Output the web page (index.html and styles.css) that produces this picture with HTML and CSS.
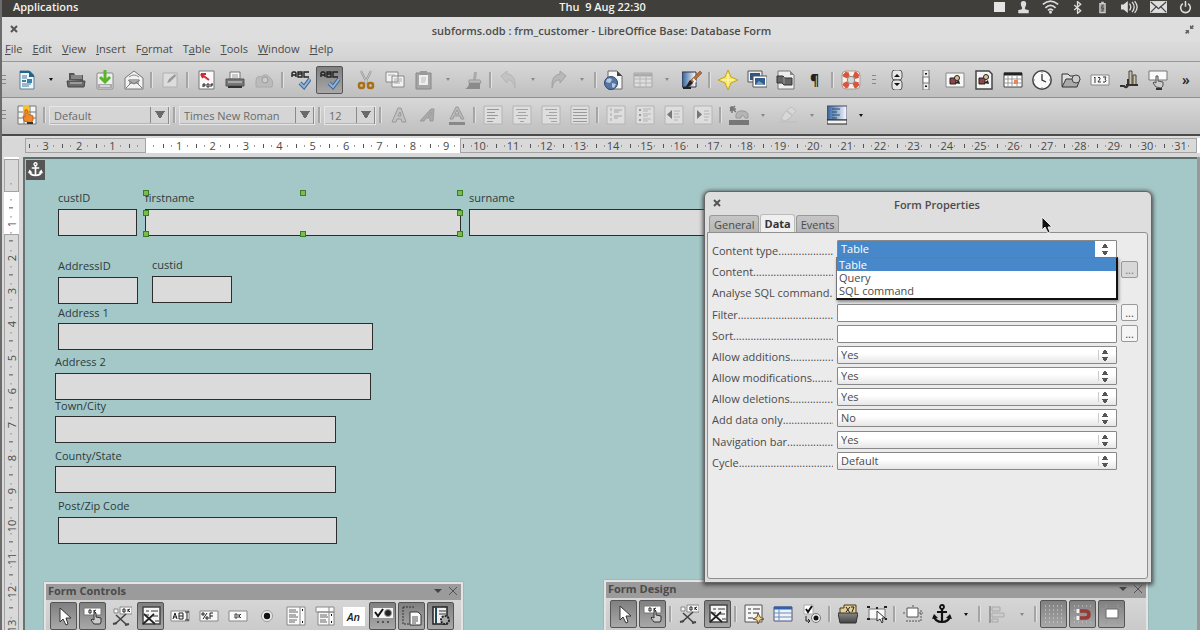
FILE: index.html
```html
<!DOCTYPE html>
<html lang="en">
<head>
<meta charset="utf-8">
<title>subforms.odb : frm_customer - LibreOffice Base: Database Form</title>
<link rel="stylesheet" href="styles.css">
</head>
<body>
<svg class="sprite" aria-hidden="true">
  <defs>
    <linearGradient id="steel" x1="0" y1="0" x2="0" y2="1"><stop offset="0" stop-color="#888"/><stop offset="1" stop-color="#444"/></linearGradient>
    <linearGradient id="sky" x1="0" y1="0" x2="1" y2="0"><stop offset="0" stop-color="#30609a"/><stop offset="1" stop-color="#fff"/></linearGradient>
  </defs>
  <symbol id="new" viewBox="0 0 20 20"><path d="M3 1h9l5 5v13H3z" fill="#eef6fb" stroke="#5f7f95"/><path d="M3 1h10l4 4v2h-5V3H3z" fill="#23658c"/><path d="M5 6h5M5 8h5M5 14h9M5 16h7" stroke="#44779a"/><path d="M5 10h4v2H5zM10 9h5v4h-5z" fill="#3b83aa"/></symbol>
  <symbol id="open" viewBox="0 0 20 20"><path d="M3 10V3h5l1 2h8v6z" fill="#555"/><path d="M5 6h11M5 8h11" stroke="#bbb"/><path d="M1 11h18l-1 6H2z" fill="#6b6b6b" stroke="#444"/><path d="M4 13h12" stroke="#ccc"/></symbol>
  <symbol id="save" viewBox="0 0 20 20"><rect x="2" y="3" width="16" height="16" rx="1" fill="#eee" stroke="#888"/><path d="M3 14h14v4H3z" fill="#aaa"/><path d="M5 16h10" stroke="#fff"/><path d="M10 0v11M5 7l5 5 5-5" fill="none" stroke="#58b52b" stroke-width="3"/></symbol>
  <symbol id="mail" viewBox="0 0 20 20"><path d="M1 8l9-7 9 7v11H1z" fill="#f2f2f2" stroke="#777"/><path d="M5 9h10v5H5z" fill="#aaa"/><path d="M4 10l6 4 6-4M2 18l6-6M18 18l-6-6" fill="none" stroke="#777"/><path d="M5 7q5-4 10 0" stroke="#888" fill="none"/></symbol>
  <symbol id="edit" viewBox="0 0 20 20"><path d="M3 3h14v14H3z" fill="#ddd" stroke="#b0b0b0"/><path d="M7 13l2-4 6-5 1 2-6 6z" fill="#999"/></symbol>
  <symbol id="pdf" viewBox="0 0 20 20"><path d="M3 1h15v18H3z" fill="#fafafa" stroke="#777"/><path d="M5 4l8 6M5 4l5 0M5 4l2 4" stroke="#d02a35" stroke-width="2"/><path d="M7 17v-3h2v2H7M11 14v3h2v-3zM17 14h-2v3M15 15h2" fill="none" stroke="#222"/></symbol>
  <symbol id="print" viewBox="0 0 20 20"><path d="M5 2h10v7H5z" fill="#f7f7f7" stroke="#777"/><path d="M7 5h6M7 7h6" stroke="#999"/><path d="M1 9h18v7H1z" fill="#777" stroke="#555"/><path d="M3 16h14v2H3z" fill="#333"/><path d="M3 12h14" stroke="#ddd"/></symbol>
  <symbol id="preview" viewBox="0 0 20 20"><path d="M2 10q1-5 5-3 5-5 9 1 4 2 2 9H2z" fill="#bbb" stroke="#aaa"/><circle cx="11" cy="10" r="3" fill="#ccc" stroke="#999"/></symbol>
  <symbol id="spell" viewBox="0 0 20 20"><path d="M1 7V3l1-1h2l1 1v4M1 5h4M7 2v5h4V2zM7 4h4M18 2h-5v5h5" fill="none" stroke="#222" stroke-width="1.4"/><path d="M9 13l4 4 6-8" fill="none" stroke="#46688e" stroke-width="4"/><path d="M9 13l4 4 6-8" fill="none" stroke="#8fb3dc" stroke-width="2"/></symbol>
  <symbol id="cut" viewBox="0 0 20 20"><path d="M5 1l6 12M15 1L9 13" stroke="#888" stroke-width="2"/><path d="M5 1l6 12M15 1L9 13" stroke="#eee" stroke-width=".7"/><g fill="none" stroke="#a87118" stroke-width="2.5"><rect x="3" y="13" width="5" height="5" rx="2"/><rect x="12" y="13" width="5" height="5" rx="2"/></g></symbol>
  <symbol id="copy" viewBox="0 0 20 20"><path d="M1 2h12v10H1zM7 6h12v11H7z" fill="#f2f2f2" stroke="#888"/><path d="M3 5h7M9 9h8M9 11h8M9 13h6" stroke="#aaa"/></symbol>
  <symbol id="paste" viewBox="0 0 20 20"><path d="M2 3h15v16H2z" fill="#a5a5a5" stroke="#888"/><path d="M5 5h9v10H5z" fill="#eee"/><path d="M6 1h7v4H6z" fill="#999"/><path d="M7 8h5M7 10h5M7 12h4" stroke="#bbb"/></symbol>
  <symbol id="brush" viewBox="0 0 20 20"><path d="M11 2h3l-1 8h-3z" fill="#aaa"/><path d="M6 10h11l1 3H6z" fill="#bbb" stroke="#999"/><path d="M6 13h11v6H2q4-2 4-6z" fill="#8b8b8b"/></symbol>
  <symbol id="undo" viewBox="0 0 20 20"><path d="M2 6l6-5v3q9 0 8 14-2-9-8-8v3z" fill="#c3c3c3" stroke="#b5b5b5"/></symbol>
  <symbol id="redo" viewBox="0 0 20 20"><path d="M18 6l-6-5v3Q3 5 4 18q2-9 8-8v3z" fill="#b8b8b8" stroke="#a2a2a2"/></symbol>
  <symbol id="globe" viewBox="0 0 20 20"><path d="M4 1h9l5 5v13H4z" fill="#f7f7f7" stroke="#666"/><path d="M13 1v5h5" fill="#444"/><circle cx="7" cy="13" r="6.500" fill="#5676a5" stroke="#2c466f"/><path d="M3 9q4-2 5 1l-2 3-4-1zM8 13l4 1-2 4-2-1z" fill="#b7cae0"/></symbol>
  <symbol id="grid" viewBox="0 0 20 20"><path d="M1 3h18v14H1z" fill="#ddd" stroke="#a6a6a6"/><path d="M1 5h18" stroke="#aaa" stroke-width="3"/><path d="M1 9h18M1 13h18M7 3v14M13 3v14" stroke="#b5b5b5"/></symbol>
  <symbol id="draw" viewBox="0 0 20 20"><path d="M0 2h14v15H0z" fill="url(#sky)" stroke="#334"/><path d="M6 13L18 1l2 2L9 14z" fill="#b96d35" stroke="#6d4124" stroke-width=".5"/><path d="M8 10l3 3-3 3-5 2z" fill="#222"/><path d="M11 9l3 3" stroke="#eee" stroke-width="2"/><path d="M1 18h8" stroke="#222" stroke-width="2"/></symbol>
  <symbol id="star" viewBox="0 0 20 20"><path d="M10 0l3 7 7 3-7 3-3 7-3-7-7-3 7-3z" fill="#f5e55c" stroke="#c2a528"/><path d="M10 4v12M4 10h12" stroke="#fffbd0"/></symbol>
  <symbol id="gallery" viewBox="0 0 20 20"><path d="M1 1h14v11H1z" fill="#eee" stroke="#555"/><path d="M3 3h10v7H3z" fill="#2d5684"/><path d="M6 6h14v11H6z" fill="#fff" stroke="#555"/><path d="M8 8h10v7H8z" fill="#2e5c8f"/><path d="M8 15l4-4 6 4z" fill="#7c9ebd"/></symbol>
  <symbol id="sources" viewBox="0 0 20 20"><path d="M2 1h12l4 4v14H2z" fill="#eee" stroke="#777"/><path d="M14 1v4h4" fill="#888"/><path d="M1 6h6l2 2h7v7H8l-2-2H1z" fill="#666" stroke="#333"/><path d="M8 7v7" stroke="#999" fill="none"/></symbol>
  <symbol id="help" viewBox="0 0 20 20"><rect x="1" y="1" width="18" height="18" rx="4" fill="#f4f0e8" stroke="#a99"/><circle cx="10" cy="10" r="6.2" fill="none" stroke="#d9543c" stroke-width="4.5" stroke-dasharray="5 4.74" stroke-dashoffset="-2"/><circle cx="10" cy="10" r="3.7" fill="#d6d6d6" stroke="#888"/><path d="M2 6l4-4M14 2l4 4M18 14l-4 4M6 18l-4-4" stroke="#d9543c" stroke-width="2"/></symbol>
  <symbol id="spin" viewBox="0 0 20 20"><rect x="5" y="0" width="10" height="10" rx="3" fill="#e8e8e8" stroke="#555"/><rect x="5" y="10" width="10" height="10" rx="3" fill="#e8e8e8" stroke="#555"/><path d="M7 7l3-3 3 3zM7 13l3 3 3-3z" fill="#111"/></symbol>
  <symbol id="scroll" viewBox="0 0 20 20"><path d="M7 0h6v20H7z" fill="#eee" stroke="#777"/><path d="M7 7h6v6H7z" fill="#fff" stroke="#777"/><path d="M9 4l1-1 1 1zM9 16l1 1 1-1z" fill="#111" stroke="#111"/></symbol>
  <symbol id="imgbtn" viewBox="0 0 20 20"><path d="M1 3h18v14H1z" fill="#f7f7f7" stroke="#888"/><path d="M5 8h6v6H5z" fill="#8d4640" stroke="#222"/><circle cx="12" cy="8" r="2.5" fill="#ddc09c" stroke="#222"/><path d="M10 13l4-3 1 4z" fill="#222"/></symbol>
  <symbol id="imgctl" viewBox="0 0 20 20"><path d="M2 1h13l3 3v15H2z" fill="#f4f4f4" stroke="#444" stroke-width="1.5"/><path d="M5 8h6v6H5z" fill="#8d4640" stroke="#222"/><circle cx="12" cy="7" r="2.5" fill="#ddc09c" stroke="#222"/><path d="M10 13l4-3 1 4z" fill="#222"/></symbol>
  <symbol id="date" viewBox="0 0 20 20"><path d="M1 3h18v14H1z" fill="#fff" stroke="#444"/><path d="M1 4h18" stroke="#222" stroke-width="3"/><path d="M1 9h18M1 13h18M5 5v12M9 5v12M14 5v12" stroke="#999"/><path d="M11 10h4v4h-4z" fill="#e8835f"/></symbol>
  <symbol id="clock" viewBox="0 0 20 20"><circle cx="10" cy="10" r="9.2" fill="#fafafa" stroke="#444" stroke-width="1.5"/><path d="M10 4v6l4 2" fill="none" stroke="#333" stroke-width="1.3"/><path d="M10 2v1M10 17v1M2 10h1M17 10h1" stroke="#888"/></symbol>
  <symbol id="file" viewBox="0 0 20 20"><path d="M1 16V4h6l2 2h7v10z" fill="#ddd" stroke="#333"/><path d="M1 17l4-8h14l-3 8z" fill="#aaa" stroke="#333"/><circle cx="15" cy="9" r="4" fill="#ccc" stroke="#444"/></symbol>
  <symbol id="num" viewBox="0 0 20 20"><path d="M1 5h18v10H1z" fill="#f8f8f8" stroke="#888"/><path d="M4 8l1-1v6M8 8l1-1 1 1v1l-2 3h3M13 7h3l-1 2q2 2 0 3h-2" fill="none" stroke="#333"/></symbol>
  <symbol id="nav" viewBox="0 0 20 20"><path d="M10 1h3v14h-3zM14 5h3v10h-3z" fill="#cdc5a5" stroke="#444"/><path d="M7 15h12M1 16h4q3 3 4-1V9" fill="none" stroke="#333" stroke-width="2"/></symbol>
  <symbol id="push" viewBox="0 0 20 20"><path d="M1 1h18v9H1z" fill="#fafafa" stroke="#777"/><path d="M8 17l-3-4 1-1 2 1V6h2v5l5 1v4l-2 2z" fill="#ccc" stroke="#555"/><path d="M8 19h6" stroke="#333" stroke-width="2"/></symbol>
  <symbol id="styles" viewBox="0 0 20 20"><path d="M1 1h18v18H1z" fill="#f5f5f5" stroke="#777"/><path d="M1 7h18M1 13h18M7 1v18M13 1v18" stroke="#777"/><path d="M6 0h6v8H6z" fill="#f6c12a"/><path d="M7 16l-1-5 2 1V5q2-1 3 1v3l5 2v4l-2 3z" fill="#ef8a2b" stroke="#c3621a"/><path d="M10 18h6" stroke="#333" stroke-width="2"/></symbol>
  <symbol id="bold" viewBox="0 0 20 20"><path d="M3 17L9 3h3l5 14h-4l-1-3H8l-1 3zM9 11h3l-1-4z" fill="#c2c2c2" stroke="#999"/></symbol>
  <symbol id="italic" viewBox="0 0 20 20"><path d="M2 16L13 4h3l-1 12h-3v-3H8l-2 3zM10 10h3V7z" fill="#aaa" stroke="#999"/></symbol>
  <symbol id="under" viewBox="0 0 20 20"><path d="M3 14L9 2h2l6 12h-3l-1-3H7l-1 3zM8 9h4l-2-4z" fill="#bbb" stroke="#999"/><path d="M2 17h16v3H2z" fill="#888"/></symbol>
  <symbol id="left" viewBox="0 0 20 20"><path d="M1 1h18v18H1z" fill="#dedede" stroke="#b4b4b4"/><path d="M4 4.500h12M4 7.500h8M4 10.500h11M4 13.500h8M4 16.500h6" stroke="#999"/></symbol>
  <symbol id="center" viewBox="0 0 20 20"><path d="M1 1h18v18H1z" fill="#dedede" stroke="#b4b4b4"/><path d="M4 4.500h12M6 7.500h8M4 10.500h12M6 13.500h8M8 16.500h4" stroke="#a5a5a5"/></symbol>
  <symbol id="right" viewBox="0 0 20 20"><path d="M1 1h18v18H1z" fill="#dedede" stroke="#b4b4b4"/><path d="M4 4.500h12M8 7.500h8M5 10.500h11M8 13.500h8M10 16.500h6" stroke="#a5a5a5"/></symbol>
  <symbol id="justify" viewBox="0 0 20 20"><path d="M1 1h18v18H1z" fill="#dedede" stroke="#b4b4b4"/><path d="M3 4.500h14M3 7.500h14M3 10.500h14M3 13.500h14M3 16.500h14" stroke="#999"/></symbol>
  <symbol id="numlist" viewBox="0 0 20 20"><path d="M1 1h18v18H1z" fill="#dedede" stroke="#b4b4b4"/><path d="M5 3v3M5 8v3M5 13v3M8 5h8M8 7h5M8 11h8M8 13h4" stroke="#a5a5a5"/></symbol>
  <symbol id="bullist" viewBox="0 0 20 20"><path d="M1 1h18v18H1z" fill="#dedede" stroke="#b4b4b4"/><path d="M4 5h2M4 10h2M4 15h2" stroke="#999" stroke-width="2"/><path d="M8 4h8M8 6h5M8 9h8M8 11h5M8 14h8M8 16h5" stroke="#b4b4b4"/></symbol>
  <symbol id="outdent" viewBox="0 0 20 20"><path d="M1 1h18v18H1z" fill="#dedede" stroke="#b4b4b4"/><path d="M8 5v9l-5-4.500z" fill="#777"/><path d="M10 6h6M10 9h5M10 12h6M10 15h4" stroke="#b4b4b4"/></symbol>
  <symbol id="indent" viewBox="0 0 20 20"><path d="M1 1h18v18H1z" fill="#dedede" stroke="#b4b4b4"/><path d="M4 5v9l5-4.500z" fill="#777"/><path d="M11 6h5M11 9h6M11 12h5M11 15h4" stroke="#b4b4b4"/></symbol>
  <symbol id="fontcol" viewBox="0 0 20 20"><path d="M0 15h20v5H0z" fill="#777"/><path d="M7 13q-1-6 4-7 6-1 8 3v4h-3q-1-4-4-2v2z" fill="#b5b5b5" stroke="#999"/><path d="M1 2l6 5M1 6l5-5M3 1v7M1 4h6" stroke="#777" stroke-width="1.500"/></symbol>
  <symbol id="marker" viewBox="0 0 20 20"><path d="M3 14l4-7 6-5 5 4-6 7-5 3z" fill="#d8d8d8" stroke="#bdbdbd"/><path d="M9 6l5 4M1 17h18" stroke="#c2c2c2" stroke-width="2"/></symbol>
  <symbol id="bgcol" viewBox="0 0 20 20"><path d="M0 1h20v14H0z" fill="url(#sky)" stroke="#446"/><path d="M5 4h8M5 7h5M5 10h8M5 13h5" stroke="#234a77"/><path d="M0 15h20v4H0z" fill="#f3f3f3" stroke="#222"/></symbol>
  <symbol id="arrow" viewBox="0 0 20 20"><path d="M6 2v14l3-3 3 6 2-1-2-6h5z" fill="#fff" stroke="#333"/></symbol>
  <symbol id="design" viewBox="0 0 20 20"><path d="M1 2h17v7H1z" fill="#fff" stroke="#777"/><path d="M6 4h2v3H6zM11 4v3M13 4l-2 1 2 2" fill="none" stroke="#222"/><path d="M11 18l-3-4 1-1 2 1V7h2v4l5 1v4l-1 2z" fill="#ccc" stroke="#333"/></symbol>
  <symbol id="control" viewBox="0 0 20 20"><path d="M8 1h12v7H8zM2 3h4v4H2z" fill="#f8f8f8" stroke="#888"/><path d="M11 3v3h2V3zM16 3v3M18 3l-2 1 2 2" stroke="#222" fill="none"/><path d="M3 18L14 8M4 9l11 10" stroke="#444" stroke-width="1.600"/><path d="M1 18l4-1M13 19l4-1" stroke="#444" stroke-width="2"/></symbol>
  <symbol id="form" viewBox="0 0 20 20"><path d="M2 1h17v17H2z" fill="#f6f6f6" stroke="#444" stroke-width="1.500"/><path d="M5 5h3M10 5h7M5 9h3M12 10h5M14 15h4" stroke="#777" stroke-width="1.500"/><path d="M2 18L13 8M3 8l11 10" stroke="#222" stroke-width="1.700"/></symbol>
  <symbol id="text" viewBox="0 0 20 20"><path d="M1 5h18v10H1z" fill="#f8f8f8" stroke="#888"/><path d="M3 13l2-6 2 6M3 11h4M9 7v6h4V7zM9 10h4M15 6h4M17 6v8M15 14h4" fill="none" stroke="#222"/></symbol>
  <symbol id="format" viewBox="0 0 20 20"><path d="M1 5h18v10H1z" fill="#f8f8f8" stroke="#888"/><path d="M3 7h2v2H3zM8 7l-4 6M7 11h2v2H7zM14 7h-3v6M11 10h3" fill="none" stroke="#222"/></symbol>
  <symbol id="button" viewBox="0 0 20 20"><path d="M1 5h18v10H1z" fill="#fafafa" stroke="#888"/><path d="M7 8v4h2V8zM11 8v4M13 8l-2 2 2 2" fill="none" stroke="#333"/></symbol>
  <symbol id="radio" viewBox="0 0 20 20"><circle cx="10" cy="10" r="5.500" fill="#eee" stroke="#999"/><circle cx="10" cy="10" r="3.200" fill="#111"/></symbol>
  <symbol id="list" viewBox="0 0 20 20"><path d="M1 1h18v18H1z" fill="#fafafa" stroke="#888"/><path d="M14 1v18" stroke="#888"/><path d="M3 4h7M3 6h9M3 9h7M3 11h9M3 14h8M3 16h6" stroke="#666"/><path d="M16 4h1M16 16h1" stroke="#111" stroke-width="2"/></symbol>
  <symbol id="combo" viewBox="0 0 20 20"><path d="M1 1h18v5H1zM3 6h16v13H3z" fill="#fafafa" stroke="#888"/><path d="M14 1v18" stroke="#888"/><path d="M5 9h7M5 11h8M5 14h6M5 16h7" stroke="#666"/><path d="M16 9h1M16 16h1" stroke="#111" stroke-width="2"/></symbol>
  <symbol id="more" viewBox="0 0 20 20"><path d="M0 2h20v10H0z" fill="#f5f5f5"/><path d="M2 6l3 4 5-7" fill="none" stroke="#111" stroke-width="2"/><circle cx="15" cy="7" r="3.500" fill="#222" stroke="#999"/><path d="M4 16h2M9 16h2M14 16h2" stroke="#555" stroke-width="2"/></symbol>
  <symbol id="designmore" viewBox="0 0 20 20"><path d="M1 1h12M1 1v17h6" fill="none" stroke="#333" stroke-dasharray="2 1"/><path d="M8 6h8l3 3v10H8z" fill="#fafafa" stroke="#333"/><path d="M10 11h6M10 13h6M10 15h6M10 17h4" stroke="#555"/></symbol>
  <symbol id="wizard" viewBox="0 0 20 20"><path d="M2 1h14v17H2z" fill="#eee" stroke="#222" stroke-width="1.500"/><path d="M5 1v17" stroke="#245" stroke-width="2"/><path d="M8 5h7M8 8h7" stroke="#333"/><circle cx="14" cy="14" r="4" fill="#aaa" stroke="#222" stroke-width="2" stroke-dasharray="2 1"/></symbol>
  <symbol id="formnav" viewBox="0 0 20 20"><path d="M1 1h17v17H1z" fill="#f6f6f6" stroke="#555"/><path d="M4 5h3M9 5h7M4 9h3M9 9h6M4 14h5" stroke="#777" stroke-width="1.500"/><path d="M14 9l2 4 4 2-4 1-2 4-1-4-4-1 4-2z" fill="#eed59a" stroke="#6e531f"/></symbol>
  <symbol id="fields" viewBox="0 0 20 20"><path d="M1 3h18v14H1z" fill="#eef3f9" stroke="#557"/><path d="M1 4h18" stroke="#2e62ad" stroke-width="3"/><path d="M1 9h18M1 13h18M6 5v12" stroke="#6c8cb5"/></symbol>
  <symbol id="convert" viewBox="0 0 20 20"><path d="M2 1h9v9H2z" fill="#fff" stroke="#aaa"/><path d="M4 5l2 3 4-6" fill="none" stroke="#111" stroke-width="2"/><circle cx="14" cy="14" r="4.500" fill="#eee" stroke="#777"/><circle cx="14" cy="14" r="2.500" fill="#111"/><path d="M4 12v5h4M6 15l2 2-2 2" fill="none" stroke="#222"/></symbol>
  <symbol id="tabs" viewBox="0 0 20 20"><path d="M2 10V4h4V1h12v9z" fill="#e8cf96" stroke="#44391f"/><path d="M8 3l4 6M12 3L8 8M13 3h3l-2 5" stroke="#222" fill="none"/><path d="M0 9h20l-2 10H2z" fill="url(#steel)" stroke="#333"/></symbol>
  <symbol id="autofocus" viewBox="0 0 20 20"><path d="M2 5h16v10H2z" fill="#fafafa" stroke="#777"/><path d="M0 3h3M17 3h3M0 15h3M9 4h2M18 15h2" stroke="#222" stroke-width="2"/><path d="M10 7v10l3-2 2 4 1-1-1-4h3z" fill="#fff" stroke="#333"/></symbol>
  <symbol id="possize" viewBox="0 0 20 20"><path d="M4 4h11v9H4z" fill="#fff" stroke="#555"/><path d="M3 17h15V6M10 1v2M0 9h3M16 9h4" fill="none" stroke="#555" stroke-dasharray="2 1"/></symbol>
  <symbol id="anchor" viewBox="0 0 20 20"><circle cx="10" cy="3" r="2" fill="none" stroke="currentColor" stroke-width="1.800"/><path d="M10 5v12M5 8h10M2 12q1 6 8 6 7 0 8-6" fill="none" stroke="currentColor" stroke-width="2.200"/><path d="M0 15l2-5 4 4zM20 15l-2-5-4 4z" fill="currentColor"/></symbol>
  <symbol id="align" viewBox="0 0 20 20"><path d="M2 2v17" stroke="#999" stroke-width="2"/><path d="M4 3h8v4H4zM4 9h12v4H4zM4 15h6v3H4z" fill="#ccc" stroke="#aaa"/></symbol>
  <symbol id="dots" viewBox="0 0 20 20"><path d="M1 2h19M1 6h19M1 10h19M1 14h19M1 18h19" stroke="#ddd" stroke-dasharray="1 3"/></symbol>
  <symbol id="magnet" viewBox="0 0 20 20"><path d="M1 2h19M1 18h19M1 6h4M1 14h4" stroke="#ccc" stroke-dasharray="1 3"/><path d="M5 7h7q4 0 4 3.500T12 14H5" fill="none" stroke="#973b38" stroke-width="3.500"/><path d="M5 5v4M5 12v4" stroke="#f3f3f3" stroke-width="3"/></symbol>
  <symbol id="helpline" viewBox="0 0 20 20"><path d="M0 5h20M4 0v20M16 0v20M0 14h20" stroke="#999" stroke-dasharray="2 1"/><path d="M4 5h12v9H4z" fill="#fff" stroke="#666"/></symbol>
  <symbol id="person" viewBox="0 0 20 20"><path d="M10 0q5 0 4 6l-2 5q0 2 6 3v5H2v-5q6-1 6-3L6 6q-1-6 4-6z" fill="#ddd"/></symbol>
  <symbol id="wifi" viewBox="0 0 20 16"><path d="M1 5q9-8 18 0M4 9q6-6 12 0M7 12q3-3 6 0" fill="none" stroke="#ddd" stroke-width="2"/><circle cx="10" cy="14" r="1.800" fill="#ddd"/></symbol>
  <symbol id="bt" viewBox="0 0 20 20"><path d="M5 6l10 9-5 4V1l5 4-10 9" fill="none" stroke="#ddd" stroke-width="2"/></symbol>
  <symbol id="battery" viewBox="0 0 20 20"><path d="M6 4h8v14H6zM8 2h4" fill="#888" stroke="#ccc" stroke-width="2"/><path d="M11 6l-3 5h4l-3 5" fill="none" stroke="#333"/></symbol>
  <symbol id="sound" viewBox="0 0 20 16"><path d="M0 5h3l5-4v14l-5-4H0z" fill="#ddd"/><path d="M10 4q3 4 0 8M13 2q5 6 0 12M16 1q6 7 0 14" fill="none" stroke="#ddd" stroke-width="1.500"/></symbol>
  <symbol id="env" viewBox="0 0 20 16"><path d="M0 1h20v14H0z" fill="#ddd"/><path d="M1 2l9 8 9-8M1 14l7-7M19 14l-7-7" fill="none" stroke="#444" stroke-width="1.500"/></symbol>
  <symbol id="power" viewBox="0 0 20 20"><path d="M6 4a7.500 7.500 0 1 0 8 0M10 0v9" fill="none" stroke="#ddd" stroke-width="2.400"/></symbol>
  <symbol id="restore" viewBox="0 0 20 20"><path d="M11 0v9h9l-3-3 3-3-3-3-3 3zM9 20v-9H0l3 3-3 3 3 3 3-3z" fill="#666"/></symbol>
</svg>

<div class="app">
  <header class="panel">
    <span class="panel-menu">Applications</span>
    <span class="panel-clock">Thu&nbsp; 9 Aug 22:30</span>
    <div class="tray">
      <span class="stop"></span>
      <svg><use href="#person"/></svg>
      <svg class="wide"><use href="#wifi"/></svg>
      <svg><use href="#bt"/></svg>
      <svg><use href="#battery"/></svg>
      <svg class="wide"><use href="#sound"/></svg>
      <svg class="wide"><use href="#env"/></svg>
      <svg><use href="#power"/></svg>
    </div>
  </header>

  <div class="titlebar">
    <button class="close" aria-label="Close"><svg viewBox="0 0 8 8"><path d="M1 1l6 6M7 1L1 7"/></svg></button>
    <h1>subforms.odb : frm_customer - LibreOffice Base: Database Form</h1>
    <button class="restore" aria-label="Restore"><svg><use href="#restore"/></svg></button>
  </div>

  <nav class="menubar">
    <a href="#"><u>F</u>ile</a><a href="#"><u>E</u>dit</a><a href="#"><u>V</u>iew</a><a href="#"><u>I</u>nsert</a><a href="#">F<u>o</u>rmat</a><a href="#">T<u>a</u>ble</a><a href="#"><u>T</u>ools</a><a href="#"><u>W</u>indow</a><a href="#"><u>H</u>elp</a>
  </nav>

  <div class="toolbar">
    <i class="grip"></i>
    <button class="tool" aria-label="New"><svg><use href="#new"/></svg></button>
    <button class="drop" aria-label="New options"></button>
    <button class="tool" aria-label="Open"><svg><use href="#open"/></svg></button>
    <button class="tool" aria-label="Save"><svg><use href="#save"/></svg></button>
    <button class="tool" aria-label="E-mail"><svg><use href="#mail"/></svg></button>
    <i class="sep"></i>
    <button class="tool" aria-label="Edit file"><svg><use href="#edit"/></svg></button>
    <i class="sep"></i>
    <button class="tool" aria-label="Export PDF"><svg><use href="#pdf"/></svg></button>
    <button class="tool" aria-label="Print"><svg><use href="#print"/></svg></button>
    <button class="tool" aria-label="Preview"><svg><use href="#preview"/></svg></button>
    <i class="sep wide"></i>
    <button class="tool" aria-label="Spelling"><svg><use href="#spell"/></svg></button>
    <button class="tool on" aria-label="AutoSpellcheck"><svg><use href="#spell"/></svg></button>
    <i class="sep blank"></i>
    <button class="tool" aria-label="Cut"><svg><use href="#cut"/></svg></button>
    <button class="tool" aria-label="Copy"><svg><use href="#copy"/></svg></button>
    <button class="tool" aria-label="Paste"><svg><use href="#paste"/></svg></button>
    <button class="drop dim" aria-label="Paste options"></button>
    <button class="tool" aria-label="Format paintbrush"><svg><use href="#brush"/></svg></button>
    <i class="sep"></i>
    <button class="tool" aria-label="Undo"><svg><use href="#undo"/></svg></button>
    <button class="drop dim" aria-label="Undo options"></button>
    <button class="tool" aria-label="Redo"><svg><use href="#redo"/></svg></button>
    <button class="drop dim" aria-label="Redo options"></button>
    <i class="sep"></i>
    <button class="tool" aria-label="Hyperlink"><svg><use href="#globe"/></svg></button>
    <button class="tool" aria-label="Table"><svg><use href="#grid"/></svg></button>
    <button class="drop dim" aria-label="Table options"></button>
    <button class="tool" aria-label="Draw functions"><svg><use href="#draw"/></svg></button>
    <i class="sep"></i>
    <button class="tool" aria-label="Navigator"><svg><use href="#star"/></svg></button>
    <button class="tool" aria-label="Gallery"><svg><use href="#gallery"/></svg></button>
    <button class="tool" aria-label="Data sources"><svg><use href="#sources"/></svg></button>
    <button class="tool pilcrow" aria-label="Nonprinting characters">¶</button>
    <i class="sep"></i>
    <button class="tool" aria-label="Help"><svg><use href="#help"/></svg></button>
    <i class="grip mid"></i>
    <button class="tool" aria-label="Spin button"><svg><use href="#spin"/></svg></button>
    <button class="tool" aria-label="Scrollbar"><svg><use href="#scroll"/></svg></button>
    <button class="tool" aria-label="Image button"><svg><use href="#imgbtn"/></svg></button>
    <button class="tool" aria-label="Image control"><svg><use href="#imgctl"/></svg></button>
    <button class="tool" aria-label="Date field"><svg><use href="#date"/></svg></button>
    <button class="tool" aria-label="Time field"><svg><use href="#clock"/></svg></button>
    <button class="tool" aria-label="File selection"><svg><use href="#file"/></svg></button>
    <button class="tool" aria-label="Numeric field"><svg><use href="#num"/></svg></button>
    <button class="tool" aria-label="Navigation bar"><svg><use href="#nav"/></svg></button>
    <button class="tool" aria-label="Push button"><svg><use href="#push"/></svg></button>
    <button class="overflow" aria-label="More tools">»</button>
  </div>

  <div class="toolbar second">
    <i class="grip"></i>
    <button class="tool" aria-label="Styles"><svg><use href="#styles"/></svg></button>
    <i class="sep"></i>
    <select class="combo c-style" aria-label="Style" disabled><option>Default</option></select>
    <i class="sep"></i>
    <select class="combo c-font" aria-label="Font name" disabled><option>Times New Roman</option></select>
    <i class="sep"></i>
    <select class="combo c-size" aria-label="Font size" disabled><option>12</option></select>
    <i class="sep"></i>
    <button class="tool" aria-label="Bold"><svg><use href="#bold"/></svg></button>
    <button class="tool" aria-label="Italic"><svg><use href="#italic"/></svg></button>
    <button class="tool" aria-label="Underline"><svg><use href="#under"/></svg></button>
    <i class="sep"></i>
    <button class="tool" aria-label="Align left"><svg><use href="#left"/></svg></button>
    <button class="tool" aria-label="Centre"><svg><use href="#center"/></svg></button>
    <button class="tool" aria-label="Align right"><svg><use href="#right"/></svg></button>
    <button class="tool" aria-label="Justify"><svg><use href="#justify"/></svg></button>
    <i class="sep"></i>
    <button class="tool" aria-label="Numbering"><svg><use href="#numlist"/></svg></button>
    <button class="tool" aria-label="Bullets"><svg><use href="#bullist"/></svg></button>
    <button class="tool" aria-label="Decrease indent"><svg><use href="#outdent"/></svg></button>
    <button class="tool" aria-label="Increase indent"><svg><use href="#indent"/></svg></button>
    <i class="sep"></i>
    <button class="tool" aria-label="Font colour"><svg><use href="#fontcol"/></svg></button>
    <button class="drop dim" aria-label="Font colour options"></button>
    <button class="tool" aria-label="Highlighting"><svg><use href="#marker"/></svg></button>
    <button class="drop dim" aria-label="Highlighting options"></button>
    <button class="tool" aria-label="Background colour"><svg><use href="#bgcol"/></svg></button>
    <button class="drop" aria-label="Background options"></button>
  </div>

  <div class="hruler">
    <div class="hmargin before"></div><div class="hmargin after"></div>
    <div class="hscale"><span>3</span><span>2</span><span>1</span><span></span><span>1</span><span>2</span><span>3</span><span>4</span><span>5</span><span>6</span><span>7</span><span>8</span><span>9</span><span>10</span><span>11</span><span>12</span><span>13</span><span>14</span><span>15</span><span>16</span><span>17</span><span>18</span><span>19</span><span>20</span><span>21</span><span>22</span><span>23</span><span>24</span><span>25</span><span>26</span><span>27</span><span>28</span><span>29</span><span>30</span><span>31</span></div>
  </div>

  <main class="workspace">
    <div class="vruler">
      <div class="vmargin before"></div><div class="vmargin after"></div>
      <div class="vscale"><span></span><span>1</span><span>2</span><span>3</span><span>4</span><span>5</span><span>6</span><span>7</span><span>8</span><span>9</span><span>10</span><span>11</span><span>12</span><span>13</span></div>
    </div>
    <div class="canvas">
      <span class="anchor-mark"><svg><use href="#anchor"/></svg></span>
      <div class="field f-cust"><label for="cust">custID</label><input id="cust"></div>
      <div class="field f-first"><label for="first">firstname</label><input id="first"></div>
      <div class="field f-sur"><label for="sur">surname</label><input id="sur"></div>
      <div class="field f-addr"><label for="addr">AddressID</label><input id="addr"></div>
      <div class="field f-cid"><label for="cid">custid</label><input id="cid"></div>
      <div class="field f-a1"><label for="a1">Address 1</label><input id="a1"></div>
      <div class="field f-a2"><label for="a2">Address 2</label><input id="a2"></div>
      <div class="field f-town"><label for="town">Town/City</label><input id="town"></div>
      <div class="field f-county"><label for="county">County/State</label><input id="county"></div>
      <div class="field f-post"><label for="post">Post/Zip Code</label><input id="post"></div>
      <div class="selection"><i class="h l t"></i><i class="h c t"></i><i class="h r t"></i><i class="h l m"></i><i class="h r m"></i><i class="h l b"></i><i class="h c b"></i><i class="h r b"></i></div>
    </div>
  </main>

  <section class="float controls">
    <h2>Form Controls<span class="wbtns"><i class="tri"></i><svg viewBox="0 0 8 8"><path d="M0 0l8 8M8 0L0 8"/></svg></span></h2>
    <div class="tools">
      <button class="tool on" aria-label="Select"><svg><use href="#arrow"/></svg></button>
      <button class="tool on" aria-label="Design mode"><svg><use href="#design"/></svg></button>
      <button class="tool" aria-label="Control"><svg><use href="#control"/></svg></button>
      <button class="tool on" aria-label="Form"><svg><use href="#form"/></svg></button>
      <button class="tool" aria-label="Text box"><svg><use href="#text"/></svg></button>
      <button class="tool" aria-label="Formatted field"><svg><use href="#format"/></svg></button>
      <button class="tool" aria-label="Push button"><svg><use href="#button"/></svg></button>
      <button class="tool" aria-label="Option button"><svg><use href="#radio"/></svg></button>
      <button class="tool" aria-label="List box"><svg><use href="#list"/></svg></button>
      <button class="tool" aria-label="Combo box"><svg><use href="#combo"/></svg></button>
      <button class="tool" aria-label="Label field"><span class="an">An</span></button>
      <button class="tool on" aria-label="More controls"><svg><use href="#more"/></svg></button>
      <button class="tool on" aria-label="Form design"><svg><use href="#designmore"/></svg></button>
      <button class="tool on" aria-label="Wizards"><svg><use href="#wizard"/></svg></button>
    </div>
  </section>

  <section class="float design">
    <h2>Form Design<span class="wbtns"><i class="tri"></i><svg viewBox="0 0 8 8"><path d="M0 0l8 8M8 0L0 8"/></svg></span></h2>
    <div class="tools">
      <button class="tool on" aria-label="Select"><svg><use href="#arrow"/></svg></button>
      <button class="tool on" aria-label="Design mode"><svg><use href="#design"/></svg></button>
      <i class="sep"></i>
      <button class="tool" aria-label="Control"><svg><use href="#control"/></svg></button>
      <button class="tool on" aria-label="Form"><svg><use href="#form"/></svg></button>
      <i class="sep"></i>
      <button class="tool" aria-label="Form navigator"><svg><use href="#formnav"/></svg></button>
      <button class="tool" aria-label="Add field"><svg><use href="#fields"/></svg></button>
      <button class="tool" aria-label="Replace with"><svg><use href="#convert"/></svg></button>
      <i class="sep"></i>
      <button class="tool" aria-label="Activation order"><svg><use href="#tabs"/></svg></button>
      <button class="tool" aria-label="Automatic control focus"><svg><use href="#autofocus"/></svg></button>
      <i class="sep"></i>
      <button class="tool" aria-label="Position and size"><svg><use href="#possize"/></svg></button>
      <button class="tool" aria-label="Change anchor"><svg><use href="#anchor"/></svg></button>
      <button class="drop" aria-label="Anchor options"></button>
      <i class="sep"></i>
      <button class="tool" aria-label="Align"><svg><use href="#align"/></svg></button>
      <button class="drop dim" aria-label="Align options"></button>
      <i class="sep"></i>
      <button class="tool on" aria-label="Display grid"><svg><use href="#dots"/></svg></button>
      <button class="tool on" aria-label="Snap to grid"><svg><use href="#magnet"/></svg></button>
      <button class="tool on" aria-label="Helplines"><svg><use href="#helpline"/></svg></button>
    </div>
  </section>

  <section class="dialog" role="dialog" aria-labelledby="dlg">
    <div class="dlg-title">
      <button class="close" aria-label="Close"><svg viewBox="0 0 8 8"><path d="M1 1l6 6M7 1L1 7"/></svg></button>
      <h2 id="dlg">Form Properties</h2>
    </div>
    <div class="tablist" role="tablist">
      <button role="tab">General</button><button role="tab" class="active" aria-selected="true">Data</button><button role="tab">Events</button>
    </div>
    <div class="sheet">
      <div class="rows">
        <div class="row"><label for="p1">Content type</label><div class="cell"><select id="p1" class="focus"><option>Table</option></select>
          <ul class="popup" role="listbox" aria-label="Content type"><li role="option" aria-selected="true" class="sel">Table</li><li role="option">Query</li><li role="option">SQL command</li></ul></div></div>
        <div class="row"><label for="p2">Content</label><div class="cell"><select id="p2"></select></div><button class="dots" aria-label="Content" disabled>...</button></div>
        <div class="row"><label for="p3">Analyse SQL command</label><div class="cell"><select id="p3"></select></div></div>
        <div class="row"><label for="p4">Filter</label><div class="cell"><input id="p4"></div><button class="dots" aria-label="Filter">...</button></div>
        <div class="row"><label for="p5">Sort</label><div class="cell"><input id="p5"></div><button class="dots" aria-label="Sort">...</button></div>
        <div class="row"><label for="p6">Allow additions</label><div class="cell"><select id="p6"><option>Yes</option></select></div></div>
        <div class="row"><label for="p7">Allow modifications</label><div class="cell"><select id="p7"><option>Yes</option></select></div></div>
        <div class="row"><label for="p8">Allow deletions</label><div class="cell"><select id="p8"><option>Yes</option></select></div></div>
        <div class="row"><label for="p9">Add data only</label><div class="cell"><select id="p9"><option>No</option></select></div></div>
        <div class="row"><label for="p10">Navigation bar</label><div class="cell"><select id="p10"><option>Yes</option></select></div></div>
        <div class="row"><label for="p11">Cycle</label><div class="cell"><select id="p11"><option>Default</option></select></div></div>
      </div>
    </div>
  </section>

  <svg class="pointer" viewBox="0 0 12 18"><path d="M1 1v13l3-3 3 6 2-1-2-5h4z"/></svg>
</div>
</body>
</html>
```
FILE: styles.css
```css
* { box-sizing: border-box; }
body {
  margin: 0;
  font: 11px/15px "Open Sans", "Noto Sans", sans-serif;
  color: #4a4a4a;
}
button, select, input { font: inherit; color: inherit; margin: 0; }
button { padding: 0; border: 0; background: none; }
h1, h2, ul { margin: 0; padding: 0; font-size: 11px; line-height: 15px; }
h1, h2, .panel, .tablist .active { font-weight: 600; }
.sprite { position: absolute; width: 0; height: 0; }

.app {
  position: relative;
  display: flex;
  flex-direction: column;
  height: 100vh;
  overflow: hidden;
  background: #d8d8d8;
  border-left: 2px solid #6c6c6c;
}

/* desktop panel */
.panel {
  display: grid;
  grid-template-columns: 1fr auto 1fr;
  align-items: center;
  height: 17px;
  margin-left: -2px;
  padding: 0 8px 5px 13px;
  background: #403f3c;
  color: #f4f3ee;
  line-height: 12px;
}
.tray { display: flex; justify-content: flex-end; align-items: center; gap: 12px; }
.tray svg { width: 13px; height: 13px; }
.tray .wide { width: 17px; height: 14px; }
.stop { width: 11px; height: 10px; background: #e4e4e4; }

/* window title */
.titlebar {
  display: grid;
  grid-template-columns: 20px 1fr 20px;
  align-items: center;
  height: 24px;
  padding: 0 1px 0 2px;
  background: #dedede;
}
.titlebar h1 { text-align: center; color: #4c4c4c; padding-top: 2px; }
.close { display: flex; justify-content: center; }
.close svg { width: 8px; height: 8px; fill: none; stroke: #555; stroke-width: 2; }
.restore svg { width: 9px; height: 9px; display: block; margin: auto; }

.menubar {
  display: flex;
  gap: 10px;
  height: 21px;
  padding: 0 3px;
  background: linear-gradient(#dcdcdc, #d2d2d2);
  border-bottom: 1px solid #999;
}
.menubar a { color: inherit; text-decoration: none; }

/* toolbars */
.toolbar {
  display: flex;
  align-items: center;
  height: 36px;
  background: linear-gradient(#d8d8d8, #bfbfbf);
  border-bottom: 1px solid #8f8f8f;
}
.toolbar.second { height: 38px; padding-bottom: 2px; border-bottom: 2px solid #4a4a4a; }
.tool {
  flex: none;
  display: flex;
  align-items: center;
  justify-content: center;
  width: 27px;
  height: 28px;
  margin: 0 1px;
  color: #111;
}
.tool svg { width: 20px; height: 20px; }
.tool.on {
  border: 1px solid #555;
  border-radius: 2px;
  background: linear-gradient(#808080, #a8a8a8);
}
.pilcrow { font-size: 14px; font-weight: bold; color: #222; }
.drop { flex: none; width: 20px; height: 28px; display: flex; align-items: center; justify-content: center; }
.drop::after { content: ""; border: 2px solid transparent; border-top: 3px solid #111; border-bottom: 0; }
.drop.dim::after { border-top-color: #888; }
.sep { flex: none; display: flex; justify-content: center; width: 7px; height: 16px; }
.sep.wide { width: 8px; }
.sep::after { content: ""; width: 2px; background: #a5a5a5; border-right: 1px solid #e2e2e2; }
.sep.blank::after { display: none; }
.grip { flex: none; width: 10px; height: 10px; background: repeating-linear-gradient(#888 0 1px, transparent 1px 4px) 0 0 / 4px 10px no-repeat; }
.grip.mid { width: 17px; background-position-x: 7px; }
.overflow { flex: 1; font-size: 14px; font-weight: 600; color: #222; }

.combo {
  appearance: none;
  height: 19px;
  margin: 0 1px;
  padding: 0 0 0 4px;
  border: 1px solid #e6e6e6;
  border-radius: 0;
  color: #6a6a6a;
  opacity: 1;
  background:
    linear-gradient(to bottom right, #6a6a6a 50%, transparent 51%) right 4px center / 5px 8px no-repeat,
    linear-gradient(to bottom left, #6a6a6a 50%, transparent 51%) right 9px center / 5px 8px no-repeat,
    linear-gradient(#8a8a8a, #8a8a8a) right 18px top 0 / 1px 100% no-repeat,
    #d5d5d5;
  box-shadow: inset -1px 0 #8a8a8a, inset 0 -1px #b5b5b5;
}
.c-style { width: 121px; }
.c-font { width: 136px; }
.c-size { width: 52px; }

/* rulers */
.hruler { position: relative; flex: none; height: 21px; background: #fff; border-top: 2px solid #ddd; border-bottom: 4px solid #d8d8d8; }
.hmargin { position: absolute; top: 0; bottom: 0; background: #d9d9d9; border: 1px solid #a3a3a3; }
.hmargin.before { left: 23px; width: 121px; }
.hmargin.after { left: 458px; right: 3px; }
.hruler::before { content: ""; position: absolute; left: 0; top: 0; bottom: 0; width: 23px; background: #d8d8d8; }
.hscale { position: relative; display: flex; height: 15px; margin: 0 3px 0 27px; overflow: hidden; }
.hscale span {
  flex: 1;
  text-align: center;
  background:
    linear-gradient(#555, #555) 0 6px / 1px 4px no-repeat,
    linear-gradient(#999, #999) 25% 7px / 1px 2px no-repeat,
    linear-gradient(#999, #999) 75% 7px / 1px 2px no-repeat;
}
.workspace { flex: 1; display: flex; min-height: 0; border-right: 3px solid #999; }
.vruler { position: relative; flex: none; width: 21px; background: linear-gradient(to right, #d8d8d8 2px, #fff 2px 17px, #d8d8d8 17px); overflow: hidden; }
.vmargin { position: absolute; left: 2px; width: 15px; background: #d9d9d9; border: 1px solid #a3a3a3; }
.vmargin.before { top: 2px; height: 33px; }
.vmargin.after { top: 77px; bottom: -1px; }
.vscale { position: relative; display: flex; flex-direction: column; width: 15px; height: 467px; margin: 18px 0 0 2px; }
.vscale span {
  flex: 1;
  display: flex;
  align-items: center;
  justify-content: center;
  writing-mode: vertical-rl;
  transform: rotate(180deg);
  background:
    linear-gradient(#555, #555) 6px 0 / 4px 1px no-repeat,
    linear-gradient(#999, #999) 7px 25% / 2px 1px no-repeat,
    linear-gradient(#999, #999) 7px 75% / 2px 1px no-repeat;
}

/* form canvas */
.canvas { position: relative; flex: 1; background: #a4c8c8; border-top: 2px solid #5d6d6d; border-left: 2px solid #687272; overflow: hidden; }
.anchor-mark { position: absolute; left: 1px; top: 1px; width: 19px; height: 20px; padding: 2px; background: #555; color: #fff; }
.anchor-mark svg { display: block; width: 15px; height: 15px; }
.field { position: absolute; display: flex; flex-direction: column; gap: 4px; color: #2e3a3a; }
.field input { width: 100%; height: 27px; padding: 0 4px; border: 1px solid #2c2c2c; background: #dbdbdb; border-radius: 0; }
.f-cust { left: 33px; top: 31px; width: 79px; }
.f-first { left: 120px; top: 31px; width: 316px; }
.f-sur { left: 444px; top: 31px; width: 316px; }
.f-addr { left: 33px; top: 99px; width: 80px; }
.f-cid { left: 127px; top: 98px; width: 80px; }
.f-a1 { left: 33px; top: 146px; width: 315px; }
.f-a2 { left: 30px; top: 195px; width: 316px; }
.f-town { left: 30px; top: 239px; width: 281px; }
.f-county { left: 30px; top: 289px; width: 281px; }
.f-post { left: 33px; top: 339px; width: 279px; }
.f-a1, .f-town, .f-county { gap: 3px; }
.selection { position: absolute; left: 118px; top: 31px; width: 320px; height: 47px; pointer-events: none; }
.h { position: absolute; width: 6px; height: 6px; background: #7cba52; border: 1px solid #3c7d22; }
.l { left: 0; } .c { left: 157px; } .r { right: 0; }
.t { top: 0; } .m { top: 20px; } .b { bottom: 0; }

/* floating toolbars */
.float { position: absolute; height: 60px; border: 2px solid #e4e4e4; border-bottom: 0; box-shadow: 0 0 1px #777; background: linear-gradient(#dcdcdc, #c6c6c6); }
.float h2 { display: flex; justify-content: space-between; align-items: flex-start; height: 16px; padding: 0 4px 0 2px; line-height: 13px; background: #9b9b9b; color: #4a4a4a; font-weight: bold; }
.wbtns { display: flex; align-items: center; gap: 7px; height: 14px; }
.wbtns svg { width: 8px; height: 8px; stroke: #555; fill: none; }
.tri { border: 4px solid transparent; border-top: 4px solid #444; border-bottom: 0; }
.tools { display: flex; align-items: center; padding: 2px 3px 0; }
.controls { left: 42px; top: 582px; width: 419px; }
.design { left: 602px; top: 580px; width: 544px; }
.an { width: 22px; height: 19px; line-height: 19px; background: #fff; color: #222; font-style: italic; font-weight: 600; }

/* properties dialog */
.dialog {
  position: absolute;
  left: 702px;
  top: 191px;
  width: 448px;
  height: 392px;
  display: flex;
  flex-direction: column;
  padding: 0 3px 3px 2px;
  border: 1px solid #666;
  border-radius: 6px 6px 0 0;
  background: #dedede;
  box-shadow: 0 1px 4px 1px #444;
}
.dlg-title { display: grid; grid-template-columns: 19px 1fr; align-items: center; height: 22px; }
.dlg-title h2 { text-align: center; color: #4c4c4c; padding-top: 2px; }
.tablist { display: flex; align-items: flex-end; gap: 1px; height: 18px; padding-left: 2px; }
.tablist button { height: 17px; line-height: 15px; padding: 0 4px; border: 1px solid #999; border-bottom: 0; border-radius: 3px 3px 0 0; background: linear-gradient(#c6c6c6, #b6b6b6); }
.tablist .active { height: 18px; padding: 0 3px; font-weight: bold; background: #efefef; color: #333; border-color: #bbb; }
.sheet { flex: 1; padding: 7px 8px 0 4px; border: 1px solid #8f8f8f; border-radius: 0 3px 3px 3px; background: #ebebeb; }
.rows { display: grid; grid-auto-rows: 1fr; height: 233px; }
.row { display: grid; grid-template-columns: 121px 280px 17px; gap: 4px; align-items: start; }
.row label { overflow: hidden; white-space: nowrap; padding-top: 3px; }
.row label::after { content: ".............................................................."; }
.cell { position: relative; height: 18px; }
.cell select, .cell input { display: block; width: 100%; height: 18px; padding: 0 0 1px 3px; border: 1px solid #888; border-radius: 1px; background: #fff; line-height: 15px; }
.cell select {
  appearance: none;
  background:
    linear-gradient(to top right, #555 50%, transparent 51%) right 8px top 2px / 3px 5px no-repeat,
    linear-gradient(to top left, #555 50%, transparent 51%) right 11px top 2px / 3px 5px no-repeat,
    linear-gradient(to bottom right, #555 50%, transparent 51%) right 8px bottom 1px / 3px 5px no-repeat,
    linear-gradient(to bottom left, #555 50%, transparent 51%) right 11px bottom 1px / 3px 5px no-repeat,
    linear-gradient(#ccc, #ccc) right 17px top 3px / 1px 10px no-repeat,
    linear-gradient(#fff 40%, #e6e6e6);
}
.cell select.focus {
  color: #fff;
  background:
    linear-gradient(to top right, #555 50%, transparent 51%) right 8px top 2px / 3px 5px no-repeat,
    linear-gradient(to top left, #555 50%, transparent 51%) right 11px top 2px / 3px 5px no-repeat,
    linear-gradient(to bottom right, #555 50%, transparent 51%) right 8px bottom 1px / 3px 5px no-repeat,
    linear-gradient(to bottom left, #555 50%, transparent 51%) right 11px bottom 1px / 3px 5px no-repeat,
    linear-gradient(to left, #fff 21px, #4788ca 21px);
}
.popup { position: absolute; z-index: 2; left: -1px; right: -1px; top: 17px; height: 43px; list-style: none; background: #fff; border: 1px solid #777; border-right: 2px solid #111; border-bottom: 2px solid #111; box-shadow: 1px 2px 3px #888; }
.popup li { height: 13px; line-height: 13px; padding-left: 2px; }
.popup .sel { background: #4788ca; color: #fff; }
.dots { width: 17px; height: 17px; border: 1px solid #999; border-radius: 2px; background: #f5f5f5; line-height: 13px; }
.dots:disabled { background: #d8d8d8; color: #777; }

.pointer { position: absolute; left: 1039px; top: 216px; width: 12px; height: 18px; }
.pointer path { fill: #111; stroke: #eee; stroke-width: 1; }
```
